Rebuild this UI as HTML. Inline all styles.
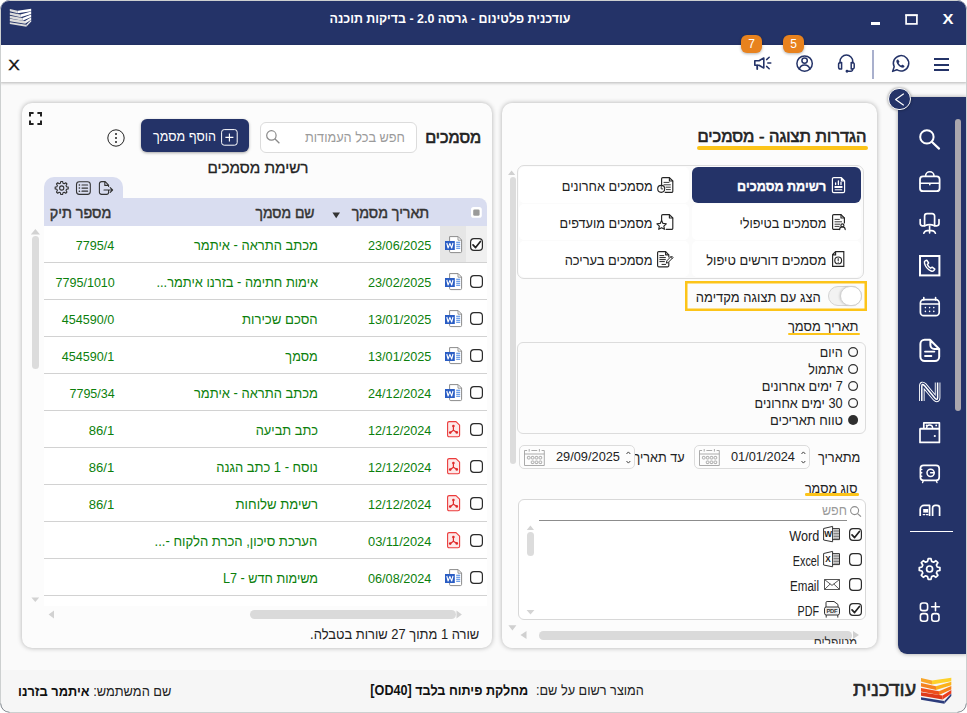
<!DOCTYPE html>
<html lang="he"><head>
<meta charset="utf-8">
<title>עודכנית פלטינום</title>
<style>
*{box-sizing:border-box;margin:0;padding:0}
html,body{width:967px;height:713px;overflow:hidden;background:#fff}
body{font-family:"Liberation Sans","DejaVu Sans",sans-serif;font-size:14px;color:#222;position:relative}
.abs{position:absolute}
#win{position:absolute;left:0;top:0;width:967px;height:713px;border-radius:10px;background:#fafafa;overflow:hidden}
.r{position:absolute;direction:rtl;white-space:nowrap;line-height:20px;height:20px;transform-origin:100% 50%}
.l{position:absolute;direction:ltr;white-space:nowrap;line-height:20px;height:20px;transform-origin:0 50%}
.c{position:absolute;white-space:nowrap;line-height:20px;height:20px;transform-origin:50% 50%;transform:translateX(-50%)}
.panel{position:absolute;background:#fcfcfc;border-radius:10px;box-shadow:0 0 5px rgba(0,0,0,.3)}
svg{position:absolute;overflow:visible}
.clip{position:absolute;overflow:hidden}

</style>
</head>
<body>
<div id="win">
<div class="abs" style="left:0px;top:0px;width:967px;height:45px;background:#243368"></div>
<svg style="left:0px;top:0px;" width="967" height="713" viewBox="0 0 967 713"><g transform="translate(9.8,8.8) scale(.706,.692) translate(-921,-677.8)"><path d="M921 678 L932 680.5 L932 684.4 L921 681.4Z" fill="#dcdcdc"></path><path d="M932 680.5 L951.3 677.8 L951.3 681.3 L932 684.4Z" fill="#fff"></path><path d="M921 683 L936 686.2 L936 690.1 L921 686.4Z" fill="#dcdcdc"></path><path d="M936 686.2 L951.3 681.8 L951.3 685.3 L936 690.1Z" fill="#fff"></path><path d="M921 688 L939 691.2 L939 695.1 L921 691.4Z" fill="#dcdcdc"></path><path d="M939 691.2 L951.3 686 L951.3 689.5 L939 695.1Z" fill="#fff"></path><path d="M921 692.3 L942.6 695.6 L942.6 699.5 L921 695.6999999999999Z" fill="#dcdcdc"></path><path d="M942.6 695.6 L951.3 690 L951.3 693.5 L942.6 699.5Z" fill="#f4f4f4"></path><path d="M921 697.2 L944.4 701 L944.4 703.8 L921 699.8000000000001Z" fill="#dcdcdc"></path><path d="M944.4 701 L951.3 693.6 L951.3 696.0 L944.4 703.8Z" fill="#eee"></path></g></svg>
<span class="c" style="left: 449.5px; top: 9px; font-size: 13px; color: rgb(255, 255, 255); font-weight: bold; direction: rtl; transform: translateX(-50%) scaleX(0.956);">עודכנית פלטינום - גרסה 2.0 - בדיקות תוכנה</span>
<div class="abs" style="left:871px;top:22px;width:9px;height:2.5px;background:#fff"></div>
<svg style="left:905px;top:13.5px;" width="13" height="11" viewBox="0 0 13 11"><rect x="1.100" y="1.300" width="10.800" height="8.600" fill="none" stroke="#fff" stroke-width="1.700"></rect><path d="M.25 1 h12.500" stroke="#fff" stroke-width="1.400"></path></svg>
<span class="c" style="left: 947.5px; top: 9px; font-size: 14px; color: rgb(255, 255, 255); font-weight: bold; transform: translateX(-50%) scaleX(1.177);">X</span>
<div class="abs" style="left:0px;top:45px;width:967px;height:37px;background:#fff;box-shadow:0 1px 3px rgba(0,0,0,.28)"></div>
<span class="c" style="left: 14px; top: 54.5px; font-size: 14.5px; color: rgb(17, 17, 17); font-weight: normal; -webkit-text-stroke: 0.35px rgb(17, 17, 17); transform: translateX(-50%) scaleX(1.189);">X</span>
<div class="abs" style="left:934px;top:58px;width:15px;height:2px;background:#243368"></div>
<div class="abs" style="left:934px;top:63.5px;width:15px;height:2px;background:#243368"></div>
<div class="abs" style="left:934px;top:69px;width:15px;height:2px;background:#243368"></div>
<div class="abs" style="left:872.3px;top:50px;width:1.6px;height:28.5px;background:#a9b0cd"></div>
<svg style="left:0px;top:0px;" width="967" height="100" viewBox="0 0 967 100"><g fill="none" stroke="#243368" stroke-width="1.5" stroke-linecap="round" stroke-linejoin="round">
<path d="M754.8 60.8 h4.2 l4.8 -2.8 v10 l-4.8 -2.8 h-4.2 z" stroke-width="1.6"></path>
<path d="M757.2 65.4 v3.6" stroke-width="1.8"></path>
<path d="M766.6 59.6 l2.6 -2.4 M767.8 63 h3 M766.6 66.4 l2.6 2.4" stroke-width="1.5"></path>
<circle cx="804.6" cy="63.6" r="7.7"></circle>
<circle cx="804.6" cy="60.6" r="2.7"></circle>
<path d="M799.4 69.2 c0.6 -3 2.6 -4.2 5.2 -4.2 s4.6 1.2 5.2 4.2"></path>
<path d="M840 63 v-1.5 a6.4 6.4 0 0 1 12.8 0 v1.5"></path>
<path d="M841.6 62.4 h-1.2 a1.8 1.8 0 0 0 -1.8 1.8 v3 a1.8 1.8 0 0 0 1.8 1.8 h1.2 z"></path>
<path d="M851.2 62.4 h1.2 a1.8 1.8 0 0 1 1.8 1.8 v3 a1.8 1.8 0 0 1 -1.8 1.8 h-1.2 z"></path>
<path d="M852.6 69 v0.6 a1.6 1.6 0 0 1 -1.6 1.6 h-3.4"></path>
<circle cx="847" cy="71.2" r="0.7" fill="#243368"></circle>
<path d="M892.6 71.4 l1.6 -4.6 a7.7 7.7 0 1 1 2.6 2.9 z"></path>
</g>
<path d="M897.4 59.6 c-0.9 0.5 -1.3 1.5 -0.9 2.7 c0.8 2.4 2.8 4.4 5.2 5.3 c1.2 0.4 2.2 0 2.7 -0.9 c0.2 -0.4 0.1 -0.8 -0.2 -1 l-1.4 -0.9 c-0.3 -0.2 -0.7 -0.1 -1 0.1 l-0.6 0.6 c-1.1 -0.5 -2.1 -1.5 -2.6 -2.6 l0.6 -0.6 c0.3 -0.3 0.3 -0.7 0.1 -1 l-0.9 -1.4 c-0.2 -0.4 -0.6 -0.5 -1 -0.3z" fill="#243368"></path>
</svg>
<div class="abs" style="left:741px;top:35px;width:21px;height:18px;background:#e8821e;border-radius:6px;box-shadow:0 1px 3px rgba(0,0,0,.3)"></div>
<span class="c" style="left:751.5px;top:34px;font-size:12px;color:#fff;">7</span>
<div class="abs" style="left:783px;top:35px;width:21px;height:18px;background:#e8821e;border-radius:6px;box-shadow:0 1px 3px rgba(0,0,0,.3)"></div>
<span class="c" style="left:793.5px;top:34px;font-size:12px;color:#fff;">5</span>
<div class="abs" style="left:0px;top:670px;width:967px;height:43px;background:#f6f6f6"></div>
<span class="r" style="right: 50.7px; top: 679.3px; font-size: 20px; color: rgb(38, 38, 38); font-weight: normal; -webkit-text-stroke: 0.55px rgb(38, 38, 38); transform: scaleX(0.986);">עודכנית</span>
<svg style="left:0px;top:0px;" width="967" height="713" viewBox="0 0 967 713"><path d="M921 678 L932 680.5 L932 684.4 L921 681.4Z" fill="#f8a527"></path><path d="M932 680.5 L951.3 677.8 L951.3 681.3 L932 684.4Z" fill="#fdd12b"></path><path d="M921 683 L936 686.2 L936 690.1 L921 686.4Z" fill="#f58220"></path><path d="M936 686.2 L951.3 681.8 L951.3 685.3 L936 690.1Z" fill="#fbb21c"></path><path d="M921 688 L939 691.2 L939 695.1 L921 691.4Z" fill="#ee4f1d"></path><path d="M939 691.2 L951.3 686 L951.3 689.5 L939 695.1Z" fill="#f68019"></path><path d="M921 692.3 L942.6 695.6 L942.6 699.5 L921 695.6999999999999Z" fill="#df3a1a"></path><path d="M942.6 695.6 L951.3 690 L951.3 693.5 L942.6 699.5Z" fill="#ea3e1f"></path><path d="M921 697.2 L944.4 701 L944.4 703.8 L921 699.8000000000001Z" fill="#2c3c7c"></path><path d="M944.4 701 L951.3 693.6 L951.3 696.0 L944.4 703.8Z" fill="#2c3c7c"></path></svg>
<span class="r" style="right: 323px; top: 680.4px; font-size: 14px; color: rgb(34, 34, 34); transform: scaleX(0.908);">המוצר רשום על שם:</span>
<span class="r" style="right: 439px; top: 680.4px; font-size: 14px; color: rgb(17, 17, 17); font-weight: bold; transform: scaleX(0.901);">מחלקת פיתוח בלבד [OD40]</span>
<span class="r" style="right: 795.7px; top: 680.5px; font-size: 14px; color: rgb(34, 34, 34); transform: scaleX(0.916);">שם המשתמש: <b style="color:#111">איתמר בזרנו</b></span>
<div class="panel" style="left:22px;top:103px;width:470px;height:545px"></div>
<div class="panel" style="left:502px;top:103px;width:375px;height:545px"></div>
<div class="abs" style="left:898px;top:97px;width:69px;height:557px;background:#243368;border-bottom-left-radius:9px;box-shadow:0 0 4px rgba(0,0,0,.35)"></div>
<div class="abs" style="left:955px;top:119px;width:5.5px;height:291.5px;background:#aba7ad;border-radius:3px"></div>
<div class="abs" style="left:910px;top:531px;width:43px;height:1px;background:#fff"></div>
<div class="abs" style="left:888.2px;top:87.7px;width:22.6px;height:22.6px;background:#243368;border-radius:50%;border:1.2px solid #fff;box-shadow:0 0 3px rgba(0,0,0,.45)"></div>
<svg style="left:888.5px;top:88.5px;" width="21" height="21" viewBox="0 0 21 21"><path d="M14.4 5 L6.6 10.4 L14.4 16" fill="none" stroke="#fff" stroke-width="1.2" stroke-linecap="round" stroke-linejoin="round"></path></svg>
<div class="clip" style="left:898px;top:97px;width:56px;height:419px">
<svg style="left:-898px;top:-97px;" width="967" height="713" viewBox="0 0 967 713"><g fill="none" stroke="#fff" stroke-width="1.8" stroke-linecap="round" stroke-linejoin="round">
<!-- search -->
<circle cx="926.9" cy="136.9" r="6.7" stroke-width="2"></circle><path d="M932 142 L939 148.6" stroke-width="2.2"></path>
<!-- briefcase -->
<rect x="920" y="176.4" width="19.6" height="14.8" rx="3"></rect><path d="M925.6 176 a4.2 4.2 0 0 1 8.4 0 M920.4 183.2 h18.8 M929.8 183.4 v1.4" stroke-width="1.6"></path>
<!-- chair -->
<path d="M924.6 225.4 v-9.4 a2.4 2.4 0 0 1 2.4 -2.4 h5.2 a2.4 2.4 0 0 1 2.4 2.4 v9.4" stroke-width="1.7"></path>
<path d="M920.2 219.6 v4 a2.2 2.2 0 0 0 2.2 2.2 h2.4 c3 -1.4 6.6 -1.4 9.6 0 h2.4 a2.2 2.2 0 0 0 2.2 -2.2 v-4" stroke-width="1.7"></path>
<path d="M929.6 226 v7 M923.8 233.2 c0.8 -2.4 3 -2.8 5.8 -2.8 s5 0.4 5.8 2.8" stroke-width="1.6"></path>
<!-- phone box -->
<rect x="920" y="256" width="19.4" height="19.4" stroke-width="2" stroke-linejoin="miter"></rect>
<path d="M925.4 260.6 c-1 0.6 -1.2 1.8 -0.8 3 c1 3.4 3.4 6 6.6 7.4 c1.2 0.5 2.4 0.2 3 -0.8 l0.6 -1 l-2.6 -2 l-1.6 1 c-1.4 -0.8 -2.6 -2.2 -3.2 -3.8 l1.2 -1.4 l-1.8 -2.8 z" stroke-width="1.5"></path>
<!-- calendar -->
<rect x="920.4" y="299.6" width="18.8" height="16" rx="3.4" stroke-width="1.7"></rect><path d="M923.8 297.6 v2.4 M935.6 297.6 v2.4 M920.8 304 h18" stroke-width="1.6"></path>
<g fill="#fff" stroke="none"><circle cx="925.4" cy="307.6" r=".8"></circle><circle cx="929.6" cy="307.6" r=".8"></circle><circle cx="933.8" cy="307.6" r=".8"></circle><circle cx="925.4" cy="311.4" r=".8"></circle><circle cx="929.6" cy="311.4" r=".8"></circle><circle cx="933.8" cy="311.4" r=".8"></circle></g>
<!-- doc -->
<path d="M930 339.8 h-5.4 a4.2 4.2 0 0 0 -4.2 4.2 v12.8 a4.2 4.2 0 0 0 4.2 4.2 h10.4 a4.2 4.2 0 0 0 4.2 -4.2 v-7.8 z M930.4 340 v5 a4 4 0 0 0 4 4 h4.6" stroke-width="2"></path>
<path d="M925 351.6 h9.4 M925 356 h6.4" stroke-width="1.8"></path>
<!-- N -->
<path d="M921.8 401 V386.4 Q921.8 383 924.4 385.6 L935 398.2 Q937.600 400.800 937.600 397.400 V382.600" stroke="#fff" stroke-width="5.600" stroke-linecap="butt"></path>
<path d="M921.8 401.600 V386.4 Q921.8 383 924.4 385.6 L935 398.2 Q937.600 400.800 937.600 397.400 V382" stroke="#243368" stroke-width="3.800" stroke-linecap="butt"></path>
<path d="M921.8 401 V386.4 Q921.8 383 924.4 385.6 L935 398.2 Q937.600 400.800 937.600 397.400 V382.600" stroke="#fff" stroke-width="1.500" stroke-linecap="butt"></path>
<!-- wallet -->
<path d="M920 428.8 v13.6 h19.4 v-13.6 z M920.4 428.6 h18.6 M923.8 428.4 v-5.6 h15.6 v6" stroke-width="1.7"></path>
<path d="M926.6 428 a3 3 0 0 1 6 0" stroke-width="1.4"></path>
<g fill="#fff" stroke="none"><circle cx="926.6" cy="425.4" r=".9"></circle><circle cx="936.2" cy="425.4" r=".9"></circle><circle cx="934.8" cy="436" r="1.1"></circle></g>
<!-- safe -->
<rect x="920.4" y="465.4" width="18.8" height="15" rx="3.2" stroke-width="1.7"></rect><circle cx="930.6" cy="472.8" r="3.6" stroke-width="1.5"></circle><path d="M930.6 472.8 h3.6 M920.6 469.4 h1.2 M920.6 472.8 h1.2 M920.6 476.2 h1.2 M923.2 480.8 l-.6 1.8 M936.4 480.8 l.6 1.8" stroke-width="1.4"></path>
<!-- truck (clipped) -->
<path d="M920.2 520 v-10.6 a4 4 0 0 1 4 -4 h5.4 v14 M932.6 520 v-12 a2.6 2.6 0 0 1 2.6 -2.6 h1.8 a2.6 2.6 0 0 1 2.600 2.6 v12" stroke-width="1.7"></path>
<rect x="923.2" y="509" width="5" height="3.6" fill="#fff" stroke="none"></rect><path d="M923.2 514.6 h1.6 M926.4 514.6 h1.6" stroke-width="1.2"></path>
</g></svg>
</div>
<svg style="left:0px;top:0px;" width="967" height="713" viewBox="0 0 967 713"><g fill="none" stroke="#fff" stroke-width="1.8" stroke-linecap="round" stroke-linejoin="round">
<!-- gear -->
<circle cx="929.6" cy="569" r="3" stroke-width="1.7"></circle>
<path stroke-width="1.7" d="M928.22 558.69 L930.98 558.69 L931.62 561.36 L933.57 562.17 L935.91 560.73 L937.87 562.69 L936.43 565.03 L937.24 566.98 L939.91 567.62 L939.91 570.38 L937.24 571.02 L936.43 572.97 L937.87 575.31 L935.91 577.27 L933.57 575.83 L931.62 576.64 L930.98 579.31 L928.22 579.31 L927.58 576.64 L925.63 575.83 L923.29 577.27 L921.33 575.31 L922.77 572.97 L921.96 571.02 L919.29 570.38 L919.29 567.62 L921.96 566.98 L922.77 565.03 L921.33 562.69 L923.29 560.73 L925.63 562.17 L927.58 561.36Z"></path>
<!-- apps -->
<rect x="920.4" y="603" width="7.200" height="7.600" rx="2.4" stroke-width="1.6"></rect><rect x="920.4" y="613.6" width="7.200" height="7.600" rx="2.400" stroke-width="1.6"></rect><rect x="931.8" y="613.6" width="7.200" height="7.600" rx="2.400" stroke-width="1.6"></rect>
<path d="M931.6 606.800 h7.800 M935.5 602.800 v8" stroke-width="1.6"></path>
</g></svg>
<span class="r" style="right: 101px; top: 126.7px; font-size: 16px; color: rgb(34, 34, 34); font-weight: normal; -webkit-text-stroke: 0.6px rgb(34, 34, 34); transform: scaleX(1.028);">הגדרות תצוגה - מסמכים</span>
<div class="abs" style="left:697px;top:146px;width:171px;height:4.4px;background:#fcc419;border-radius:2.2px"></div>
<div class="abs" style="left:510px;top:177px;width:5.5px;height:287px;background:#dcdcdc;border-radius:3px"></div>
<svg style="left:0px;top:0px;" width="967" height="713" viewBox="0 0 967 713"><path d="M508 175 l3.6 -4.600 l3.600 4.600z M508.400 625.2 h8 l-4 5.200z M526.500 631 v8 l-6 -4z M853 631 v8 l6 -4z" fill="#d0d0d0"></path></svg>
<div class="abs" style="left:517px;top:165px;width:346.5px;height:113.5px;border:1px solid #dcdcdc;border-radius:7px;background:#fbfbfb"></div>
<div class="abs" style="left:519px;top:167px;width:169.5px;height:36px;background:#fff;border-radius:5px"></div>
<div class="abs" style="left:692px;top:204px;width:169px;height:36px;background:#fff;border-radius:5px"></div>
<div class="abs" style="left:519px;top:204px;width:169.5px;height:36px;background:#fff;border-radius:5px"></div>
<div class="abs" style="left:692px;top:241px;width:169px;height:36px;background:#fff;border-radius:5px"></div>
<div class="abs" style="left:519px;top:241px;width:169.5px;height:36px;background:#fff;border-radius:5px"></div>
<div class="abs" style="left:692px;top:167px;width:169px;height:36px;background:#243368;border-radius:6px"></div>
<span class="r" style="right: 141px; top: 176.4px; font-size: 14px; color: rgb(255, 255, 255); font-weight: bold; -webkit-text-stroke: 0.35px rgb(255, 255, 255); transform: scaleX(0.898);">רשימת מסמכים</span>
<span class="r" style="right: 141px; top: 213px; font-size: 14px; color: rgb(34, 34, 34); transform: scaleX(0.902);">מסמכים בטיפולי</span>
<span class="r" style="right: 141px; top: 250px; font-size: 14px; color: rgb(34, 34, 34); transform: scaleX(0.921);">מסמכים דורשים טיפול</span>
<span class="r" style="right: 314px; top: 176px; font-size: 14px; color: rgb(34, 34, 34); transform: scaleX(0.912);">מסמכים אחרונים</span>
<span class="r" style="right: 314px; top: 213px; font-size: 14px; color: rgb(34, 34, 34); transform: scaleX(0.907);">מסמכים מועדפים</span>
<span class="r" style="right: 314px; top: 250px; font-size: 14px; color: rgb(34, 34, 34); transform: scaleX(0.92);">מסמכים בעריכה</span>
<svg style="left:685px;top:281px;" width="182" height="30" viewBox="0 0 182 30"><rect x="1.250" y="1.250" width="179.500" height="27.500" fill="none" stroke="#fcc419" stroke-width="2.500"></rect></svg>
<span class="r" style="right: 146px; top: 286.5px; font-size: 14px; color: rgb(34, 34, 34); transform: scaleX(0.927);">הצג עם תצוגה מקדימה</span>
<div class="abs" style="left:828px;top:286px;width:34px;height:20px;border:1px solid #d4d4d4;border-radius:10px;background:#f2f2f2"></div>
<div class="abs" style="left:839.5px;top:286px;width:22.5px;height:20px;border:1px solid #d0d0d0;border-radius:10px;background:#fff;box-shadow:-1px 0 2px rgba(0,0,0,.12)"></div>
<span class="r" style="right: 108.4px; top: 315.9px; font-size: 14px; color: rgb(34, 34, 34); transform: scaleX(0.922);">תאריך מסמך</span>
<div class="abs" style="left:788px;top:333px;width:72px;height:2.3px;background:#fcc419;border-radius:1.150px"></div>
<div class="abs" style="left:517px;top:342px;width:349px;height:91.5px;border:1px solid #dcdcdc;border-radius:6px;background:#fcfcfc"></div>
<span class="r" style="right: 124.3px; top: 342.2px; font-size: 14px; color: rgb(34, 34, 34); transform: scaleX(0.896);">היום</span>
<svg style="left:847.7px;top:346.9px;" width="10.2" height="10.2" viewBox="0 0 10.2 10.2"><circle cx="5.100" cy="5.100" r="4.400" fill="none" stroke="#333" stroke-width="1.250"></circle></svg>
<span class="r" style="right: 124.3px; top: 359.2px; font-size: 14px; color: rgb(34, 34, 34); transform: scaleX(0.894);">אתמול</span>
<svg style="left:847.7px;top:363.9px;" width="10.2" height="10.2" viewBox="0 0 10.2 10.2"><circle cx="5.100" cy="5.100" r="4.400" fill="none" stroke="#333" stroke-width="1.250"></circle></svg>
<span class="r" style="right: 124.3px; top: 376.2px; font-size: 14px; color: rgb(34, 34, 34); transform: scaleX(0.912);">7 ימים אחרונים</span>
<svg style="left:847.7px;top:380.9px;" width="10.2" height="10.2" viewBox="0 0 10.2 10.2"><circle cx="5.100" cy="5.100" r="4.400" fill="none" stroke="#333" stroke-width="1.250"></circle></svg>
<span class="r" style="right: 124.3px; top: 393.2px; font-size: 14px; color: rgb(34, 34, 34); transform: scaleX(0.911);">30 ימים אחרונים</span>
<svg style="left:847.7px;top:397.9px;" width="10.2" height="10.2" viewBox="0 0 10.2 10.2"><circle cx="5.100" cy="5.100" r="4.400" fill="none" stroke="#333" stroke-width="1.250"></circle></svg>
<span class="r" style="right: 124.3px; top: 410.2px; font-size: 14px; color: rgb(34, 34, 34); transform: scaleX(0.924);">טווח תאריכים</span>
<svg style="left:847.7px;top:414.9px;" width="10.2" height="10.2" viewBox="0 0 10.2 10.2"><circle cx="5.100" cy="5.100" r="5" fill="#2e2e2e"></circle></svg>
<span class="r" style="right: 106.4px; top: 447px; font-size: 14px; color: rgb(34, 34, 34); transform: scaleX(0.916);">מתאריך</span>
<span class="r" style="right: 282.3px; top: 447px; font-size: 14px; color: rgb(34, 34, 34); transform: scaleX(0.901);">עד תאריך</span>
<div class="abs" style="left:694px;top:445px;width:116px;height:23.5px;border:1px solid #dcdcdc;border-radius:5px;background:#fdfdfd"></div>
<span class="l" style="left: 731.4px; top: 447.2px; font-size: 13px; color: rgb(34, 34, 34); transform: scaleX(0.983);">01/01/2024</span>
<svg style="left:800.8px;top:450.6px;" width="5" height="13" viewBox="0 0 5 13"><path d="M.5 3 L2.400 .9 L4.300 3 M.5 10 L2.400 12.100 L4.300 10" fill="none" stroke="#444" stroke-width="1"></path></svg>
<svg style="left:699.3px;top:448.6px;" width="21" height="17" viewBox="0 0 21 17"><g fill="none" stroke="#a2a2a2" stroke-width=".9"><path d="M.5 1.500 V16.500 H20.300 V1.500 M.5 1.500 h2.600 M7.400 1.500 h5.800 M17.600 1.500 h2.700 M5.200 0 v2.600 M15.400 0 v2.600 M.5 5 h19.800"></path>
<rect x="3.400" y="7.400" width="2.600" height="2.600" rx=".7"></rect><rect x="7.300" y="7.400" width="2.600" height="2.600" rx=".7"></rect><rect x="11.200" y="7.400" width="2.600" height="2.600" rx=".7"></rect><rect x="15.100" y="7.400" width="2.600" height="2.600" rx=".7"></rect>
<rect x="7.300" y="12" width="2.600" height="2.600" rx=".7"></rect><rect x="11.200" y="12" width="2.600" height="2.600" rx=".7"></rect><rect x="15.100" y="12" width="2.600" height="2.600" rx=".7"></rect></g></svg>
<div class="abs" style="left:519px;top:445px;width:116px;height:23.5px;border:1px solid #dcdcdc;border-radius:5px;background:#fdfdfd"></div>
<span class="l" style="left: 556.4px; top: 447.2px; font-size: 13px; color: rgb(34, 34, 34); transform: scaleX(0.983);">29/09/2025</span>
<svg style="left:625.8px;top:450.6px;" width="5" height="13" viewBox="0 0 5 13"><path d="M.5 3 L2.400 .9 L4.300 3 M.5 10 L2.400 12.100 L4.300 10" fill="none" stroke="#444" stroke-width="1"></path></svg>
<svg style="left:524.3px;top:448.6px;" width="21" height="17" viewBox="0 0 21 17"><g fill="none" stroke="#a2a2a2" stroke-width=".9"><path d="M.5 1.500 V16.500 H20.300 V1.500 M.5 1.500 h2.600 M7.400 1.500 h5.800 M17.600 1.500 h2.700 M5.200 0 v2.600 M15.400 0 v2.600 M.5 5 h19.800"></path>
<rect x="3.400" y="7.400" width="2.600" height="2.600" rx=".7"></rect><rect x="7.300" y="7.400" width="2.600" height="2.600" rx=".7"></rect><rect x="11.200" y="7.400" width="2.600" height="2.600" rx=".7"></rect><rect x="15.100" y="7.400" width="2.600" height="2.600" rx=".7"></rect>
<rect x="7.300" y="12" width="2.600" height="2.600" rx=".7"></rect><rect x="11.200" y="12" width="2.600" height="2.600" rx=".7"></rect><rect x="15.100" y="12" width="2.600" height="2.600" rx=".7"></rect></g></svg>
<span class="r" style="right: 110px; top: 478px; font-size: 14px; color: rgb(34, 34, 34); transform: scaleX(0.899);">סוג מסמך</span>
<div class="abs" style="left:804.6px;top:493.4px;width:54.4px;height:2.4px;background:#fcc419;border-radius:1.2px"></div>
<div class="abs" style="left:518px;top:499px;width:348px;height:120.5px;border:1px solid #d8d8d8;border-radius:6px;background:#fff"></div>
<span class="r" style="right: 120.5px; top: 499.8px; font-size: 14px; color: rgb(154, 154, 154); transform: scaleX(0.893);">חפש</span>
<svg style="left:850px;top:505.5px;" width="12" height="11" viewBox="0 0 12 11"><circle cx="4.600" cy="4.600" r="4" fill="none" stroke="#8e8e8e" stroke-width="1.100"></circle><path d="M7.600 7.600 L11 10.600" stroke="#8e8e8e" stroke-width="1.200"></path></svg>
<div class="abs" style="left:539px;top:520px;width:308px;height:1.2px;background:#8c8c8c"></div>
<div class="abs" style="left:527px;top:532px;width:7px;height:24px;background:#dcdcdc;border-radius:3.500px"></div>
<svg style="left:0px;top:0px;" width="967" height="713" viewBox="0 0 967 713"><path d="M526.8 530 l3.600 -4.400 l3.600 4.400z M526.6 610 h7.800 l-3.900 4.600z" fill="#d4d4d4"></path></svg>
<svg style="left:849px;top:528px;" width="13" height="13" viewBox="0 0 13 13"><rect x=".6" y=".6" width="11.800" height="11.800" rx="3.400" fill="#fff" stroke="#2b2b2b" stroke-width="1.200"></rect><path d="M3 6.800 L5.600 9.600 L10.400 3.400" fill="none" stroke="#222" stroke-width="1.700" stroke-linecap="round" stroke-linejoin="round"></path></svg>
<span class="r" style="right: 148px; top: 525.5px; font-size: 14px; color: rgb(34, 34, 34); font-weight: normal; direction: ltr; transform: scaleX(0.904);">Word</span>
<svg style="left:849px;top:553px;" width="13" height="13" viewBox="0 0 13 13"><rect x=".6" y=".6" width="11.800" height="11.800" rx="3.400" fill="#fff" stroke="#2b2b2b" stroke-width="1.200"></rect></svg>
<span class="r" style="right: 148px; top: 550.5px; font-size: 14px; color: rgb(34, 34, 34); font-weight: normal; direction: ltr; transform: scaleX(0.774);">Excel</span>
<svg style="left:849px;top:578px;" width="13" height="13" viewBox="0 0 13 13"><rect x=".6" y=".6" width="11.800" height="11.800" rx="3.400" fill="#fff" stroke="#2b2b2b" stroke-width="1.200"></rect></svg>
<span class="r" style="right: 148px; top: 575.5px; font-size: 14px; color: rgb(34, 34, 34); font-weight: normal; direction: ltr; transform: scaleX(0.828);">Email</span>
<svg style="left:849px;top:603px;" width="13" height="13" viewBox="0 0 13 13"><rect x=".6" y=".6" width="11.800" height="11.800" rx="3.400" fill="#fff" stroke="#2b2b2b" stroke-width="1.200"></rect><path d="M3 6.800 L5.600 9.600 L10.400 3.400" fill="none" stroke="#222" stroke-width="1.700" stroke-linecap="round" stroke-linejoin="round"></path></svg>
<span class="r" style="right: 148px; top: 600.5px; font-size: 14px; color: rgb(34, 34, 34); font-weight: normal; direction: ltr; transform: scaleX(0.768);">PDF</span>
<div class="abs" style="left:539px;top:631px;width:312.5px;height:8.5px;background:#dadada;border-radius:4.300px"></div>
<svg style="left:832px;top:177px;" width="18" height="18" viewBox="0 0 18 18"><g fill="none" stroke="#fff" stroke-width="1.15" stroke-linecap="round" stroke-linejoin="round"><path d="M1.800 .6 h7.600 l3.200 3.200 v10.400 a1.400 1.400 0 0 1 -1.400 1.400 h-9.400 a1.400 1.400 0 0 1 -1.400 -1.400 v-12.200 a1.400 1.400 0 0 1 1.400 -1.400z M9.400 .8 v3 h3" stroke-width="1.200"></path><path d="M3.600 7.600 v-1.600 M6.400 7.600 v-3.600 M9 7.600 v-2.400" stroke-width="1.300"></path><path d="M3.200 10 h6.600" stroke-width="1.800"></path><path d="M3.200 12.800 h6.600" stroke-width="1"></path></g></svg>
<svg style="left:832px;top:214px;" width="18" height="18" viewBox="0 0 18 18"><g fill="none" stroke="#262626" stroke-width="1.15" stroke-linecap="round" stroke-linejoin="round"><path d="M7.600 15.400 h-5.800 a1.200 1.200 0 0 1 -1.200 -1.200 v-12.400 a1.200 1.200 0 0 1 1.200 -1.200 h7.200 l3.400 3.400 v5"></path><path d="M9 .8 v3.200 h3.200"></path><path d="M3 5.400 h4.400 M3 7.800 h6.600 M3 10.200 h4.800 M3 12.400 h4.200" stroke-width=".9"></path><circle cx="10.400" cy="11.400" r="1.500"></circle><path d="M7.600 15.600 a2.800 2.800 0 0 1 5.600 0"></path></g></svg>
<svg style="left:832px;top:251px;" width="18" height="18" viewBox="0 0 18 18"><g fill="none" stroke="#262626" stroke-width="1.15" stroke-linecap="round" stroke-linejoin="round"><path d="M3.600 .6 h8.200 v14.800 h-11.200 v-11.800 z M3.600 .8 v3 h-3" stroke-linejoin="miter"></path><circle cx="6.200" cy="9.400" r="3.400"></circle><path d="M6.200 7.600 v2 M6.200 11.200 v.1" stroke-width="1.100"></path></g></svg>
<svg style="left:657px;top:177px;" width="18" height="18" viewBox="0 0 18 18"><g fill="none" stroke="#262626" stroke-width="1.15" stroke-linecap="round" stroke-linejoin="round"><path d="M4.600 9 v-7.200 a1.200 1.200 0 0 1 1.200 -1.200 h6.600 l3.400 3.400 v10.200 a1.200 1.200 0 0 1 -1.200 1.200 h-6.400"></path><path d="M12.400 .8 v3.200 h3.200"></path><path d="M7 5.400 h5 M7 7.800 h6.400 M9 10.200 h4.400 M9.400 12.600 h4" stroke-width=".9"></path><circle cx="4.200" cy="11.800" r="3.500"></circle><path d="M4.200 9.800 v2.100 h1.600" stroke-width=".9"></path></g></svg>
<svg style="left:657px;top:214px;" width="18" height="18" viewBox="0 0 18 18"><g fill="none" stroke="#262626" stroke-width="1.15" stroke-linecap="round" stroke-linejoin="round"><path d="M4.600 6.400 v-4.600 a1.200 1.200 0 0 1 1.200 -1.200 h6.600 l3.400 3.400 v10.200 a1.200 1.200 0 0 1 -1.200 1.200 h-5.400"></path><path d="M12.400 .8 v3.200 h3.200"></path><path d="M4.600 6.400 l1.400 3 l3.300 .4 l-2.450 2.250 l.65 3.250 l-2.900 -1.650 l-2.900 1.650 l.65 -3.250 l-2.450 -2.250 l3.300 -.4z"></path></g></svg>
<svg style="left:657px;top:251px;" width="18" height="18" viewBox="0 0 18 18"><g fill="none" stroke="#262626" stroke-width="1.15" stroke-linecap="round" stroke-linejoin="round"><path d="M11.800 11.600 v3 a1.200 1.200 0 0 1 -1.200 1.200 h-8.800 a1.200 1.200 0 0 1 -1.200 -1.200 v-12.800 a1.200 1.200 0 0 1 1.200 -1.200 h6.800 l3.200 3.200 v2.200"></path><path d="M8.600 .8 v3 h3"></path><path d="M2.800 4.600 h4 M2.800 6.600 h5.600 M2.800 8.600 h5.600 M2.800 10.600 h4.600 M5 13.400 h3.600" stroke-width="1"></path><path d="M9.400 11.800 l.5 -2 l4.600 -4.800 l1.500 1.500 l-4.600 4.800z M13.600 5.900 l1.500 1.500" stroke-width="1"></path></g></svg>
<svg style="left:823px;top:526px;" width="17" height="16" viewBox="0 0 17 16"><g fill="none" stroke="#333" stroke-width="1" stroke-linejoin="round"><path d="M.6 2.500 L9.600 .4 V15.800 L.6 14z" fill="#fff"></path><path d="M9.600 2.600 H16.500 V13.600 H9.600"></path><path d="M10.400 4.2 h5.600 M10.400 5.8 h5.600 M10.400 7.4 h5.600 M10.400 9 h5.600 M10.400 10.6 h5.600 M10.400 12.2 h5.600 " stroke-width=".8" stroke="#555"></path></g><text x="5.100" y="11" font-size="8.200" font-weight="bold" text-anchor="middle" fill="#222" font-family="Liberation Sans, sans-serif">W</text></svg>
<svg style="left:823px;top:551px;" width="17" height="16" viewBox="0 0 17 16"><g fill="none" stroke="#333" stroke-width="1" stroke-linejoin="round"><path d="M.6 2.500 L9.600 .4 V15.800 L.6 14z" fill="#fff"></path><path d="M9.600 2.600 H16.500 V13.600 H9.600"></path><path d="M10.400 4.2 h5.600 M10.400 5.8 h5.600 M10.400 7.4 h5.600 M10.400 9 h5.600 M10.400 10.6 h5.600 M10.400 12.2 h5.600 " stroke-width=".8" stroke="#555"></path></g><text x="5.100" y="11" font-size="8.200" font-weight="bold" text-anchor="middle" fill="#222" font-family="Liberation Sans, sans-serif">X</text></svg>
<svg style="left:824px;top:579px;" width="16" height="11" viewBox="0 0 16 11"><g fill="none" stroke="#444" stroke-width=".9" stroke-linejoin="round"><rect x=".5" y=".5" width="15" height="10"></rect><path d="M.5 .5 L8 6.400 L15.500 .5 M.5 10.500 L6.200 5 M15.500 10.500 L9.800 5"></path></g></svg>
<svg style="left:824px;top:601px;" width="16" height="17" viewBox="0 0 16 17"><g fill="none" stroke="#333" stroke-width="1" stroke-linejoin="round"><path d="M2 6 V1.600 q0 -1.100 1.100 -1.100 h6.900 l4 3 V6"></path><rect x=".5" y="6" width="15" height="8" rx="1.800" fill="#eee"></rect><path d="M2.200 14 v2.600 M13.800 14 v2.600"></path></g><text x="8" y="12.300" font-size="5.800" font-weight="bold" text-anchor="middle" fill="#333" font-family="Liberation Sans, sans-serif" textLength="11">PDF</text></svg>
<div class="clip" style="left:800px;top:635px;width:70px;height:9.400px">
<span class="r" style="right: 13px; top: -3.4px; font-size: 14px; color: rgb(51, 51, 51); transform: scaleX(0.85);">מטופלים</span>
</div>
<svg style="left:29px;top:112px;" width="13" height="13" viewBox="0 0 13 13"><path d="M1 4.600 V1 H4.600 M8.400 1 H12 V4.600 M12 8.400 V12 H8.400 M4.600 12 H1 V8.400" fill="none" stroke="#222" stroke-width="2"></path></svg>
<svg style="left:106.9px;top:129.4px;" width="18" height="18" viewBox="0 0 18 18"><circle cx="9" cy="9" r="8.200" fill="none" stroke="#222" stroke-width="1"></circle><circle cx="9" cy="5" r="1" fill="#222"></circle><circle cx="9" cy="9" r="1" fill="#222"></circle><circle cx="9" cy="13" r="1" fill="#222"></circle></svg>
<div class="abs" style="left:141px;top:119px;width:108px;height:33px;background:#243368;border-radius:6px;box-shadow:0 1px 3px rgba(0,0,0,.35)"></div>
<span class="r" style="right: 751px; top: 126.3px; font-size: 14px; color: rgb(255, 255, 255); transform: scaleX(0.901);">הוסף מסמך</span>
<svg style="left:221px;top:129px;" width="17" height="17" viewBox="0 0 17 17"><rect x=".6" y=".6" width="15.600" height="15.600" rx="2.600" fill="none" stroke="#fff" stroke-width="1"></rect><path d="M4.400 8.400 h8 M8.400 4.400 v8" stroke="#fff" stroke-width="1.100"></path></svg>
<div class="abs" style="left:259.5px;top:121.5px;width:157px;height:31px;border:1px solid #dcdcdc;border-radius:6px;background:#fff"></div>
<span class="r" style="right: 562.3px; top: 127px; font-size: 14px; color: rgb(155, 155, 155); transform: scaleX(0.909);">חפש בכל העמודות</span>
<svg style="left:266px;top:130px;" width="15" height="15" viewBox="0 0 15 15"><circle cx="5.400" cy="5.400" r="4.700" fill="none" stroke="#8a8a8a" stroke-width="1.200"></circle><path d="M8.800 8.800 L13.400 13.200" stroke="#8a8a8a" stroke-width="1.300"></path></svg>
<span class="r" style="right: 485.6px; top: 127px; font-size: 16.5px; color: rgb(34, 34, 34); font-weight: normal; -webkit-text-stroke: 0.6px rgb(34, 34, 34); transform: scaleX(0.98);">מסמכים</span>
<span class="c" style="left: 257.5px; top: 158px; font-size: 15.5px; color: rgb(34, 34, 34); font-weight: normal; direction: rtl; -webkit-text-stroke: 0.3px rgb(34, 34, 34); transform: translateX(-50%) scaleX(0.984);">רשימת מסמכים</span>
<div class="abs" style="left:44px;top:177px;width:79px;height:22px;background:#d9ddf0;border-radius:10px 10px 0 0"></div>
<div class="abs" style="left:44px;top:198px;width:443px;height:28px;background:#d9ddf0;border-radius:0 8px 0 0"></div>
<div class="abs" style="left:44px;top:226px;width:443px;height:380px;background:#fff"></div>
<div class="abs" style="left:440.3px;top:226px;width:25.5px;height:36.5px;background:#e6e6e6"></div>
<div class="abs" style="left:465.8px;top:226px;width:21.2px;height:36.5px;background:#f0f0f0"></div>
<div class="abs" style="left:44px;top:262px;width:443px;height:1px;background:#d2d2d2"></div>
<div class="abs" style="left:44px;top:299px;width:443px;height:1px;background:#d2d2d2"></div>
<div class="abs" style="left:44px;top:336px;width:443px;height:1px;background:#d2d2d2"></div>
<div class="abs" style="left:44px;top:373px;width:443px;height:1px;background:#d2d2d2"></div>
<div class="abs" style="left:44px;top:410px;width:443px;height:1px;background:#d2d2d2"></div>
<div class="abs" style="left:44px;top:447px;width:443px;height:1px;background:#d2d2d2"></div>
<div class="abs" style="left:44px;top:484px;width:443px;height:1px;background:#d2d2d2"></div>
<div class="abs" style="left:44px;top:521px;width:443px;height:1px;background:#d2d2d2"></div>
<div class="abs" style="left:44px;top:558px;width:443px;height:1px;background:#d2d2d2"></div>
<div class="abs" style="left:44px;top:595px;width:443px;height:1px;background:#d2d2d2"></div>
<span class="r" style="right: 538.3px; top: 203px; font-size: 14.5px; color: rgb(51, 51, 51); font-weight: normal; -webkit-text-stroke: 0.45px rgb(51, 51, 51); transform: scaleX(0.979);">תאריך מסמך</span>
<span class="r" style="right: 652.7px; top: 203px; font-size: 14.5px; color: rgb(51, 51, 51); font-weight: normal; -webkit-text-stroke: 0.45px rgb(51, 51, 51); transform: scaleX(0.96);">שם מסמך</span>
<span class="r" style="right: 855.6px; top: 203px; font-size: 14.5px; color: rgb(51, 51, 51); font-weight: normal; -webkit-text-stroke: 0.45px rgb(51, 51, 51); transform: scaleX(0.987);">מספר תיק</span>
<svg style="left:332px;top:211.5px;" width="9" height="7" viewBox="0 0 9 7"><path d="M.4 .6 H8 L4.200 6.200z" fill="#333"></path></svg>
<svg style="left:471px;top:207px;" width="11" height="11" viewBox="0 0 11 11"><rect x="0" y="0" width="10.800" height="10.800" rx="2.600" fill="#fff"></rect><rect x="2.200" y="2.400" width="6.400" height="6.400" rx="1.400" fill="#9a9a9a"></rect></svg>
<svg style="left:470px;top:238px;" width="13" height="13" viewBox="0 0 13 13"><rect x=".6" y=".6" width="11.800" height="11.800" rx="3.400" fill="#fff" stroke="#2b2b2b" stroke-width="1.200"></rect><path d="M3 6.800 L5.600 9.600 L10.400 3.400" fill="none" stroke="#222" stroke-width="1.700" stroke-linecap="round" stroke-linejoin="round"></path></svg>
<span class="l" style="left: 367.8px; top: 235.5px; font-size: 13.5px; color: rgb(12, 127, 12); transform: scaleX(0.938);">23/06/2025</span>
<span class="r" style="right: 649.3px; top: 235.4px; font-size: 14px; color: rgb(12, 127, 12); transform: scaleX(0.926);">מכתב התראה - איתמר</span>
<span class="r" style="right: 852.4px; top: 235.5px; font-size: 13.5px; color: rgb(12, 127, 12); transform: scaleX(0.935);">7795/4</span>
<svg style="left:445px;top:236px;" width="18" height="18" viewBox="0 0 18 18"><path d="M4.600 .6 h8.600 l3.400 3.400 v11.400 q0 1.200 -1.200 1.200 h-9.600 q-1.200 0 -1.200 -1.200z" fill="#fff" stroke="#8c8c8c" stroke-width="1" stroke-linejoin="round"></path><path d="M13 .8 v3.400 h3.400" fill="none" stroke="#8c8c8c" stroke-width=".9"></path><path d="M11.200 6.200 h4 M11.200 8.200 h4 M11.200 10.200 h4 M11.200 12.200 h4" stroke="#3f7fe0" stroke-width="1.100"></path><rect x="0" y="5" width="9.800" height="9" fill="#2a5dc4"></rect><path d="M1.800 7 l1.300 5 l1.800 -4.600 l1.800 4.600 l1.300 -5" fill="none" stroke="#fff" stroke-width="1.100" stroke-linejoin="round"></path></svg>
<svg style="left:470px;top:275px;" width="13" height="13" viewBox="0 0 13 13"><rect x=".6" y=".6" width="11.800" height="11.800" rx="3.400" fill="#fff" stroke="#2b2b2b" stroke-width="1.200"></rect></svg>
<span class="l" style="left: 367.8px; top: 272.5px; font-size: 13.5px; color: rgb(12, 127, 12); transform: scaleX(0.938);">23/02/2025</span>
<span class="r" style="right: 649.3px; top: 272.4px; font-size: 14px; color: rgb(12, 127, 12); transform: scaleX(0.918);">אימות חתימה - בזרנו איתמר...</span>
<span class="r" style="right: 852.4px; top: 272.5px; font-size: 13.5px; color: rgb(12, 127, 12); transform: scaleX(0.929);">7795/1010</span>
<svg style="left:445px;top:273px;" width="18" height="18" viewBox="0 0 18 18"><path d="M4.600 .6 h8.600 l3.400 3.400 v11.400 q0 1.200 -1.200 1.200 h-9.600 q-1.200 0 -1.200 -1.200z" fill="#fff" stroke="#8c8c8c" stroke-width="1" stroke-linejoin="round"></path><path d="M13 .8 v3.400 h3.400" fill="none" stroke="#8c8c8c" stroke-width=".9"></path><path d="M11.200 6.200 h4 M11.200 8.200 h4 M11.200 10.200 h4 M11.200 12.200 h4" stroke="#3f7fe0" stroke-width="1.100"></path><rect x="0" y="5" width="9.800" height="9" fill="#2a5dc4"></rect><path d="M1.800 7 l1.300 5 l1.800 -4.600 l1.800 4.600 l1.300 -5" fill="none" stroke="#fff" stroke-width="1.100" stroke-linejoin="round"></path></svg>
<svg style="left:470px;top:312px;" width="13" height="13" viewBox="0 0 13 13"><rect x=".6" y=".6" width="11.800" height="11.800" rx="3.400" fill="#fff" stroke="#2b2b2b" stroke-width="1.200"></rect></svg>
<span class="l" style="left: 367.8px; top: 309.5px; font-size: 13.5px; color: rgb(12, 127, 12); transform: scaleX(0.938);">13/01/2025</span>
<span class="r" style="right: 649.3px; top: 309.4px; font-size: 14px; color: rgb(12, 127, 12); transform: scaleX(0.939);">הסכם שכירות</span>
<span class="r" style="right: 852.4px; top: 309.5px; font-size: 13.5px; color: rgb(12, 127, 12); transform: scaleX(0.932);">454590/0</span>
<svg style="left:445px;top:310px;" width="18" height="18" viewBox="0 0 18 18"><path d="M4.600 .6 h8.600 l3.400 3.400 v11.400 q0 1.200 -1.200 1.200 h-9.600 q-1.200 0 -1.200 -1.200z" fill="#fff" stroke="#8c8c8c" stroke-width="1" stroke-linejoin="round"></path><path d="M13 .8 v3.400 h3.400" fill="none" stroke="#8c8c8c" stroke-width=".9"></path><path d="M11.200 6.200 h4 M11.200 8.200 h4 M11.200 10.200 h4 M11.200 12.200 h4" stroke="#3f7fe0" stroke-width="1.100"></path><rect x="0" y="5" width="9.800" height="9" fill="#2a5dc4"></rect><path d="M1.800 7 l1.300 5 l1.800 -4.600 l1.800 4.600 l1.300 -5" fill="none" stroke="#fff" stroke-width="1.100" stroke-linejoin="round"></path></svg>
<svg style="left:470px;top:349px;" width="13" height="13" viewBox="0 0 13 13"><rect x=".6" y=".6" width="11.800" height="11.800" rx="3.400" fill="#fff" stroke="#2b2b2b" stroke-width="1.200"></rect></svg>
<span class="l" style="left: 367.8px; top: 346.5px; font-size: 13.5px; color: rgb(12, 127, 12); transform: scaleX(0.938);">13/01/2025</span>
<span class="r" style="right: 649.3px; top: 346.4px; font-size: 14px; color: rgb(12, 127, 12); transform: scaleX(0.906);">מסמך</span>
<span class="r" style="right: 852.4px; top: 346.5px; font-size: 13.5px; color: rgb(12, 127, 12); transform: scaleX(0.932);">454590/1</span>
<svg style="left:445px;top:347px;" width="18" height="18" viewBox="0 0 18 18"><path d="M4.600 .6 h8.600 l3.400 3.400 v11.400 q0 1.200 -1.200 1.200 h-9.600 q-1.200 0 -1.200 -1.200z" fill="#fff" stroke="#8c8c8c" stroke-width="1" stroke-linejoin="round"></path><path d="M13 .8 v3.400 h3.400" fill="none" stroke="#8c8c8c" stroke-width=".9"></path><path d="M11.200 6.200 h4 M11.200 8.200 h4 M11.200 10.200 h4 M11.200 12.200 h4" stroke="#3f7fe0" stroke-width="1.100"></path><rect x="0" y="5" width="9.800" height="9" fill="#2a5dc4"></rect><path d="M1.800 7 l1.300 5 l1.800 -4.600 l1.800 4.600 l1.300 -5" fill="none" stroke="#fff" stroke-width="1.100" stroke-linejoin="round"></path></svg>
<svg style="left:470px;top:386px;" width="13" height="13" viewBox="0 0 13 13"><rect x=".6" y=".6" width="11.800" height="11.800" rx="3.400" fill="#fff" stroke="#2b2b2b" stroke-width="1.200"></rect></svg>
<span class="l" style="left: 367.8px; top: 383.5px; font-size: 13.5px; color: rgb(12, 127, 12); transform: scaleX(0.938);">24/12/2024</span>
<span class="r" style="right: 649.3px; top: 383.4px; font-size: 14px; color: rgb(12, 127, 12); transform: scaleX(0.926);">מכתב התראה - איתמר</span>
<span class="r" style="right: 852.4px; top: 383.5px; font-size: 13.5px; color: rgb(12, 127, 12); transform: scaleX(0.93);">7795/34</span>
<svg style="left:445px;top:384px;" width="18" height="18" viewBox="0 0 18 18"><path d="M4.600 .6 h8.600 l3.400 3.400 v11.400 q0 1.200 -1.200 1.200 h-9.600 q-1.200 0 -1.200 -1.200z" fill="#fff" stroke="#8c8c8c" stroke-width="1" stroke-linejoin="round"></path><path d="M13 .8 v3.400 h3.400" fill="none" stroke="#8c8c8c" stroke-width=".9"></path><path d="M11.200 6.200 h4 M11.200 8.200 h4 M11.200 10.200 h4 M11.200 12.200 h4" stroke="#3f7fe0" stroke-width="1.100"></path><rect x="0" y="5" width="9.800" height="9" fill="#2a5dc4"></rect><path d="M1.800 7 l1.300 5 l1.800 -4.600 l1.800 4.600 l1.300 -5" fill="none" stroke="#fff" stroke-width="1.100" stroke-linejoin="round"></path></svg>
<svg style="left:470px;top:423px;" width="13" height="13" viewBox="0 0 13 13"><rect x=".6" y=".6" width="11.800" height="11.800" rx="3.400" fill="#fff" stroke="#2b2b2b" stroke-width="1.200"></rect></svg>
<span class="l" style="left: 367.8px; top: 420.5px; font-size: 13.5px; color: rgb(12, 127, 12); transform: scaleX(0.938);">12/12/2024</span>
<span class="r" style="right: 649.3px; top: 420.4px; font-size: 14px; color: rgb(12, 127, 12); transform: scaleX(0.916);">כתב תביעה</span>
<span class="r" style="right: 852.4px; top: 420.5px; font-size: 13.5px; color: rgb(12, 127, 12); transform: scaleX(0.97);">86/1</span>
<svg style="left:447px;top:421.3px;" width="14" height="17" viewBox="0 0 14 17"><path d="M2.200 .6 h6.800 l3.600 3.600 v10 q0 1.600 -1.600 1.600 h-8.800 q-1.600 0 -1.600 -1.600 v-12 q0 -1.600 1.600 -1.600z" fill="#fde9e9" stroke="#ec3b3b" stroke-width="1.100" stroke-linejoin="round"></path><g fill="none" stroke="#e02a2a" stroke-width="1.200" stroke-linecap="round"><path d="M6.400 5.200 v4 l-3 2.200 M6.400 9.200 l3.200 2"></path></g><circle cx="6.400" cy="5" r="1.300" fill="#e02a2a"></circle><circle cx="3.200" cy="11.600" r="1.300" fill="#e02a2a"></circle><circle cx="9.800" cy="11.400" r="1.300" fill="#e02a2a"></circle></svg>
<svg style="left:470px;top:460px;" width="13" height="13" viewBox="0 0 13 13"><rect x=".6" y=".6" width="11.800" height="11.800" rx="3.400" fill="#fff" stroke="#2b2b2b" stroke-width="1.200"></rect></svg>
<span class="l" style="left: 367.8px; top: 457.5px; font-size: 13.5px; color: rgb(12, 127, 12); transform: scaleX(0.938);">12/12/2024</span>
<span class="r" style="right: 649.3px; top: 457.4px; font-size: 14px; color: rgb(12, 127, 12); transform: scaleX(0.925);">נוסח - 1 כתב הגנה</span>
<span class="r" style="right: 852.4px; top: 457.5px; font-size: 13.5px; color: rgb(12, 127, 12); transform: scaleX(0.97);">86/1</span>
<svg style="left:447px;top:458.3px;" width="14" height="17" viewBox="0 0 14 17"><path d="M2.200 .6 h6.800 l3.600 3.600 v10 q0 1.600 -1.600 1.600 h-8.800 q-1.600 0 -1.600 -1.600 v-12 q0 -1.600 1.600 -1.600z" fill="#fde9e9" stroke="#ec3b3b" stroke-width="1.100" stroke-linejoin="round"></path><g fill="none" stroke="#e02a2a" stroke-width="1.200" stroke-linecap="round"><path d="M6.400 5.200 v4 l-3 2.200 M6.400 9.200 l3.200 2"></path></g><circle cx="6.400" cy="5" r="1.300" fill="#e02a2a"></circle><circle cx="3.200" cy="11.600" r="1.300" fill="#e02a2a"></circle><circle cx="9.800" cy="11.400" r="1.300" fill="#e02a2a"></circle></svg>
<svg style="left:470px;top:497px;" width="13" height="13" viewBox="0 0 13 13"><rect x=".6" y=".6" width="11.800" height="11.800" rx="3.400" fill="#fff" stroke="#2b2b2b" stroke-width="1.200"></rect></svg>
<span class="l" style="left: 367.8px; top: 494.5px; font-size: 13.5px; color: rgb(12, 127, 12); transform: scaleX(0.938);">12/12/2024</span>
<span class="r" style="right: 649.3px; top: 494.4px; font-size: 14px; color: rgb(12, 127, 12); transform: scaleX(0.937);">רשימת שלוחות</span>
<span class="r" style="right: 852.4px; top: 494.5px; font-size: 13.5px; color: rgb(12, 127, 12); transform: scaleX(0.97);">86/1</span>
<svg style="left:447px;top:495.3px;" width="14" height="17" viewBox="0 0 14 17"><path d="M2.200 .6 h6.800 l3.600 3.600 v10 q0 1.600 -1.600 1.600 h-8.800 q-1.600 0 -1.600 -1.600 v-12 q0 -1.600 1.600 -1.600z" fill="#fde9e9" stroke="#ec3b3b" stroke-width="1.100" stroke-linejoin="round"></path><g fill="none" stroke="#e02a2a" stroke-width="1.200" stroke-linecap="round"><path d="M6.400 5.200 v4 l-3 2.200 M6.400 9.200 l3.200 2"></path></g><circle cx="6.400" cy="5" r="1.300" fill="#e02a2a"></circle><circle cx="3.200" cy="11.600" r="1.300" fill="#e02a2a"></circle><circle cx="9.800" cy="11.400" r="1.300" fill="#e02a2a"></circle></svg>
<svg style="left:470px;top:534px;" width="13" height="13" viewBox="0 0 13 13"><rect x=".6" y=".6" width="11.800" height="11.800" rx="3.400" fill="#fff" stroke="#2b2b2b" stroke-width="1.200"></rect></svg>
<span class="l" style="left: 367.8px; top: 531.5px; font-size: 13.5px; color: rgb(12, 127, 12); transform: scaleX(0.952);">03/11/2024</span>
<span class="r" style="right: 649.3px; top: 531.4px; font-size: 14px; color: rgb(12, 127, 12); transform: scaleX(0.934);">הערכת סיכון, הכרת הלקוח -...</span>
<svg style="left:447px;top:532.3px;" width="14" height="17" viewBox="0 0 14 17"><path d="M2.200 .6 h6.800 l3.600 3.600 v10 q0 1.600 -1.600 1.600 h-8.800 q-1.600 0 -1.600 -1.600 v-12 q0 -1.600 1.600 -1.600z" fill="#fde9e9" stroke="#ec3b3b" stroke-width="1.100" stroke-linejoin="round"></path><g fill="none" stroke="#e02a2a" stroke-width="1.200" stroke-linecap="round"><path d="M6.400 5.200 v4 l-3 2.200 M6.400 9.200 l3.200 2"></path></g><circle cx="6.400" cy="5" r="1.300" fill="#e02a2a"></circle><circle cx="3.200" cy="11.600" r="1.300" fill="#e02a2a"></circle><circle cx="9.800" cy="11.400" r="1.300" fill="#e02a2a"></circle></svg>
<svg style="left:470px;top:571px;" width="13" height="13" viewBox="0 0 13 13"><rect x=".6" y=".6" width="11.800" height="11.800" rx="3.400" fill="#fff" stroke="#2b2b2b" stroke-width="1.200"></rect></svg>
<span class="l" style="left: 367.8px; top: 568.5px; font-size: 13.5px; color: rgb(12, 127, 12); transform: scaleX(0.938);">06/08/2024</span>
<span class="r" style="right: 649.3px; top: 568.4px; font-size: 14px; color: rgb(12, 127, 12); transform: scaleX(0.906);">משימות חדש - L7</span>
<svg style="left:445px;top:569px;" width="18" height="18" viewBox="0 0 18 18"><path d="M4.600 .6 h8.600 l3.400 3.400 v11.400 q0 1.200 -1.200 1.200 h-9.600 q-1.200 0 -1.200 -1.200z" fill="#fff" stroke="#8c8c8c" stroke-width="1" stroke-linejoin="round"></path><path d="M13 .8 v3.400 h3.400" fill="none" stroke="#8c8c8c" stroke-width=".9"></path><path d="M11.200 6.200 h4 M11.200 8.200 h4 M11.200 10.200 h4 M11.200 12.200 h4" stroke="#3f7fe0" stroke-width="1.100"></path><rect x="0" y="5" width="9.800" height="9" fill="#2a5dc4"></rect><path d="M1.800 7 l1.300 5 l1.800 -4.600 l1.800 4.600 l1.300 -5" fill="none" stroke="#fff" stroke-width="1.100" stroke-linejoin="round"></path></svg>
<div class="abs" style="left:32px;top:236px;width:7px;height:132.5px;background:#dcdcdc;border-radius:3.500px"></div>
<svg style="left:0px;top:0px;" width="967" height="713" viewBox="0 0 967 713"><path d="M30.800 234.600 l4.600 -5.600 l4.600 5.600z M31.400 597.500 h7.800 l-3.900 4.600z M54 610.500 v8 l-5.400 -4z M456.500 610.500 v8 l5.400 -4z" fill="#d2d2d2"></path></svg>
<div class="abs" style="left:249.5px;top:610px;width:206px;height:9px;background:#dadada;border-radius:4.500px"></div>
<span class="r" style="right: 488px; top: 623.6px; font-size: 14px; color: rgb(34, 34, 34); transform: scaleX(0.923);">שורה 1 מתוך 27 שורות בטבלה.</span>
<svg style="left:0px;top:0px;" width="967" height="713" viewBox="0 0 967 713"><g fill="none" stroke="#333" stroke-width="1.100" stroke-linecap="round" stroke-linejoin="round"><path d="M60.82 181.46 L62.58 181.46 L62.98 183.17 L64.21 183.68 L65.70 182.75 L66.95 184.00 L66.02 185.49 L66.53 186.72 L68.24 187.12 L68.24 188.88 L66.53 189.28 L66.02 190.51 L66.95 192.00 L65.70 193.25 L64.21 192.32 L62.98 192.83 L62.58 194.54 L60.82 194.54 L60.42 192.83 L59.19 192.32 L57.70 193.25 L56.45 192.00 L57.38 190.51 L56.87 189.28 L55.16 188.88 L55.16 187.12 L56.87 186.72 L57.38 185.49 L56.45 184.00 L57.70 182.75 L59.19 183.68 L60.42 183.17Z"></path><circle cx="61.700" cy="188" r="2.100"></circle>
<rect x="76.500" y="181.800" width="13.800" height="12.600" rx="2.800"></rect><path d="M82 185 h5.600 M82 188.100 h5.600 M82 191.200 h5.600" stroke-width="1.200"></path><path d="M79.300 185 h.2 M79.300 188.100 h.2 M79.300 191.200 h.2" stroke-width="1.500"></path>
<path d="M108.600 190.600 v1.600 a2.200 2.200 0 0 1 -2.200 2.200 h-4.800 a2.200 2.200 0 0 1 -2.200 -2.200 v-8.400 a2.200 2.200 0 0 1 2.200 -2.200 h3.600 l3.400 3.600 v1.200 M104.800 181.800 v3.600 h3.600 M104 190 h8.400 M110.200 187.600 l2.400 2.400 l-2.400 2.400"></path></g></svg>
<div class="abs" style="left:0px;top:0px;width:967px;height:713px;border:1px solid #cdd0d0;border-radius:9px;pointer-events:none"></div>
<svg style="left:0px;top:0px;pointer-events:none" width="967" height="713" viewBox="0 0 967 713"><path d="M.7 703.500 A8.800 8.800 0 0 0 9.500 712.300 M966.300 703.500 A8.800 8.800 0 0 1 957.500 712.300" fill="none" stroke="#7d838c" stroke-width="1"></path></svg>
</div>


</body></html>
